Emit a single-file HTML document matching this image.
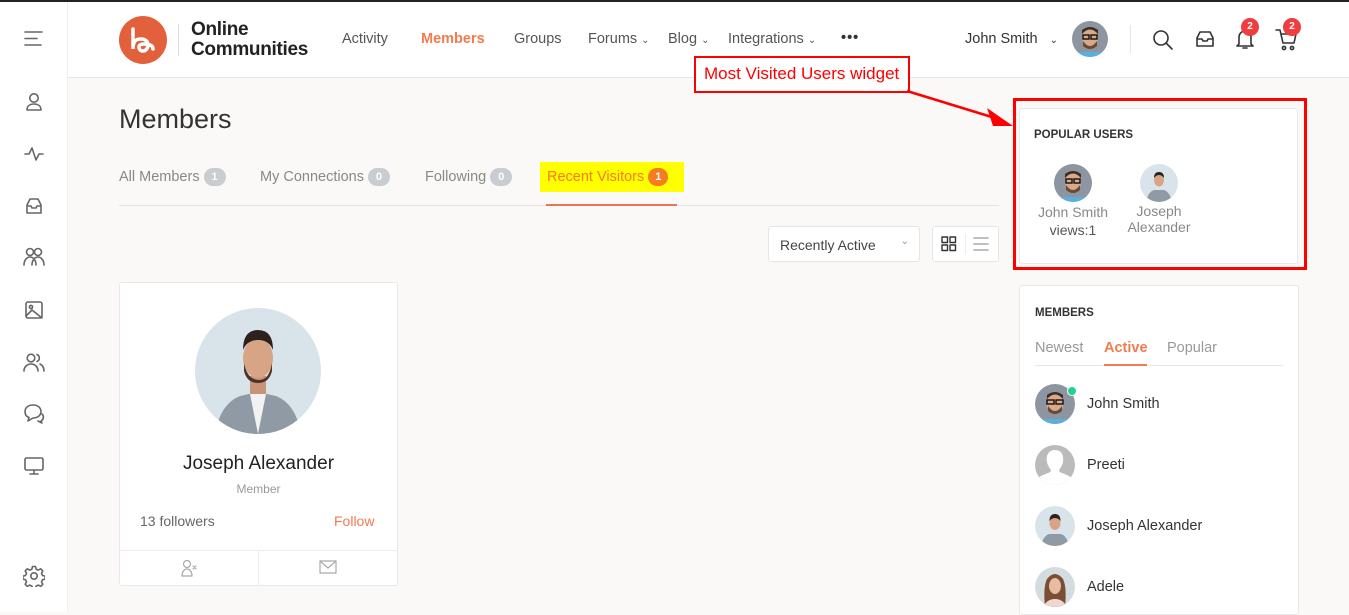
<!DOCTYPE html>
<html><head><meta charset="utf-8"><style>
*{margin:0;padding:0;box-sizing:border-box}
body{width:1349px;height:610px;overflow:hidden;background:#faf9f7;font-family:"Liberation Sans",sans-serif;position:relative;color:#333}
.a{position:absolute}
.ic{position:absolute;stroke:#666;fill:none;stroke-width:1.6;stroke-linecap:round;stroke-linejoin:round}
.nav{position:absolute;top:31px;font-size:14.5px;color:#555}
.badge{display:inline-block;width:22px;height:18px;border-radius:9px;background:#c9ccd1;color:#fff;font-size:11px;font-weight:bold;text-align:center;line-height:18px;vertical-align:1px;margin-left:4px}
.tab{position:absolute;top:168px;font-size:14.5px;color:#888}
</style></head><body>
<div class="a" style="left:0;top:0;width:1349px;height:2px;background:#222"></div>
<!-- sidebar -->
<div class="a" style="left:0;top:2px;width:68px;height:610px;background:#fff;border-right:1px solid #eee"></div>
<!-- header -->
<div class="a" style="left:68px;top:2px;width:1281px;height:76px;background:#fff;border-bottom:1px solid #e8e8e8"></div>
<svg class="ic" style="left:24px;top:30px" width="20" height="18"><path d="M1 2h17M1 8.5h12M1 15h16"/></svg>
<svg class="ic" style="left:24px;top:92px" width="20" height="20"><circle cx="10" cy="6" r="4.2"/><path d="M3 18c0-4 3-6 7-6s7 2 7 6z"/></svg>
<svg class="ic" style="left:24px;top:144px" width="20" height="20"><path d="M1 10h4l3-6 4 12 3-6h4"/></svg>
<svg class="ic" style="left:24px;top:196px" width="20" height="20"><path d="M3 9l3-6h8l3 6v8H3z M3 10h4l1 2h4l1-2h4"/></svg>
<svg class="ic" style="left:22px;top:246px" width="24" height="22"><circle cx="8" cy="6" r="3.5"/><circle cx="16" cy="6" r="3.5"/><path d="M2 19c0-5 3-8 6-8s6 3 6 8M10 19c0-5 3-8 6-8s6 3 6 8"/></svg>
<svg class="ic" style="left:24px;top:300px" width="20" height="20"><rect x="2" y="2" width="16" height="16" rx="2"/><circle cx="7" cy="7" r="1.6"/><path d="M2 16l6-6 10 8"/></svg>
<svg class="ic" style="left:23px;top:352px" width="22" height="20"><circle cx="8" cy="6" r="3.8"/><path d="M1 19c0-4 3-7 7-7s7 3 7 7M14 2.5a3.8 3.8 0 0 1 0 7M17 12c2 1 4 3 4 7"/></svg>
<svg class="ic" style="left:23px;top:403px" width="22" height="22"><path d="M10 2c5 0 8 3 8 6.5S15 15 10 15l-5 3 1-3.5C3 13.5 2 11 2 8.5 2 5 5 2 10 2z"/><path d="M19 11c2 2 2 5-1 7l1 2-4-2"/></svg>
<svg class="ic" style="left:24px;top:456px" width="20" height="20"><rect x="1" y="2" width="18" height="12" rx="1.5"/><path d="M10 14v4M6 18h8"/></svg>
<svg class="ic" style="left:23px;top:565px" width="22" height="22"><circle cx="11" cy="11" r="3.2"/><path d="M9.5 1.5h3l.6 2.6 2.2 1 2.4-1.3 2.1 2.1-1.3 2.4 1 2.2 2.6.6v3l-2.6.6-1 2.2 1.3 2.4-2.1 2.1-2.4-1.3-2.2 1-.6 2.6h-3l-.6-2.6-2.2-1-2.4 1.3-2.1-2.1 1.3-2.4-1-2.2-2.6-.6v-3l2.6-.6 1-2.2-1.3-2.4 2.1-2.1 2.4 1.3 2.2-1z"/></svg>
<!-- logo -->
<svg class="a" style="left:118px;top:15px" width="50" height="50"><circle cx="25" cy="25" r="24" fill="#e2613c"/><path d="M15 14v20c0-8 3-10 8-10s7 3 7 6-2 6-5 6-4-2-4-4 2-3 5-3c5 0 9 1 9 5" fill="none" stroke="#fff" stroke-width="3.5" stroke-linecap="round"/></svg>
<div class="a" style="left:178px;top:24px;width:1px;height:32px;background:#ddd"></div>
<div class="a" style="left:191px;top:20px;font-size:19px;font-weight:bold;line-height:20px;color:#222;letter-spacing:-0.3px">Online<br>Communities</div>
<div class="nav" style="left:342px">Activity</div>
<div class="nav" style="left:421px;color:#f07c4f;font-weight:bold">Members</div>
<div class="nav" style="left:514px">Groups</div>
<div class="nav" style="left:588px">Forums <span style="font-size:10px">⌄</span></div>
<div class="nav" style="left:668px">Blog <span style="font-size:10px">⌄</span></div>
<div class="nav" style="left:728px">Integrations <span style="font-size:10px">⌄</span></div>
<div class="nav" style="left:841px;font-weight:bold;letter-spacing:1px;top:30px;color:#333">•••</div>
<div class="nav" style="left:965px;color:#333">John Smith &nbsp;&nbsp;<span style="font-size:10px">⌄</span></div>
<svg class="a" style="left:1072px;top:21px" width="36" height="36"><defs><clipPath id="c1"><circle cx="18" cy="18" r="18"/></clipPath></defs><g clip-path="url(#c1)"><rect width="36" height="36" fill="#8d96a0"/><ellipse cx="18" cy="17" rx="8" ry="10" fill="#d9a98a"/><path d="M10 13q8-9 16 0v-4q-8-6-16 0z" fill="#3a2d25"/><path d="M11 20q7 10 14 0v5q-7 6-14 0z" fill="#6b4a35"/><rect x="11" y="14" width="6" height="4" fill="none" stroke="#111" stroke-width="1.4"/><rect x="19" y="14" width="6" height="4" fill="none" stroke="#111" stroke-width="1.4"/><rect x="6" y="31" width="24" height="8" fill="#5ab0dd"/></g></svg>
<div class="a" style="left:1130px;top:25px;width:1px;height:28px;background:#e5e5e5"></div>
<svg class="ic" style="left:1152px;top:29px;stroke:#333" width="22" height="22"><circle cx="9" cy="9" r="7"/><path d="M14 14l6 6"/></svg>
<svg class="ic" style="left:1194px;top:29px;stroke:#333" width="22" height="20"><path d="M3 9l3-6h10l3 6v8H3z M3 10h5l1 2h4l1-2h5"/></svg>
<svg class="ic" style="left:1235px;top:28px;stroke:#333" width="20" height="22"><path d="M4 16V9a6 6 0 0 1 12 0v7l2 2H2z M8 20h4"/></svg>
<svg class="ic" style="left:1275px;top:28px;stroke:#333" width="24" height="24"><path d="M1 2h4l3 13h11l2-9H7"/><circle cx="9" cy="20" r="1.6"/><circle cx="17" cy="20" r="1.6"/></svg>
<div class="a" style="left:1241px;top:18px;width:18px;height:18px;border-radius:9px;background:#ef3e42;color:#fff;font-size:10px;font-weight:bold;text-align:center;line-height:18px">2</div>
<div class="a" style="left:1283px;top:18px;width:18px;height:18px;border-radius:9px;background:#ef3e42;color:#fff;font-size:10px;font-weight:bold;text-align:center;line-height:18px">2</div>
<!-- title -->
<div class="a" style="left:119px;top:104px;font-size:27px;color:#333">Members</div>
<div class="tab" style="left:119px">All Members<span class="badge">1</span></div>
<div class="tab" style="left:260px">My Connections<span class="badge">0</span></div>
<div class="tab" style="left:425px">Following<span class="badge">0</span></div>
<div class="a" style="left:540px;top:162px;width:144px;height:30px;background:#ffff00"></div>
<div class="tab" style="left:547px;color:#f77b1f">Recent Visitors<span class="badge" style="background:#f77b1f;width:20px">1</span></div>
<div class="a" style="left:119px;top:205px;width:880px;height:1px;background:#e4e4e4"></div>
<div class="a" style="left:546px;top:204px;width:131px;height:2px;background:#e8755a"></div>
<!-- controls -->
<div class="a" style="left:768px;top:226px;width:152px;height:36px;background:#fff;border:1px solid #e6e6e6;border-radius:3px;font-size:14px;color:#444;padding:10px 0 0 11px">Recently Active<span style="position:absolute;right:10px;top:9px;font-size:10px;color:#999">⌄</span></div>
<div class="a" style="left:932px;top:226px;width:67px;height:36px;background:#fff;border:1px solid #e6e6e6;border-radius:3px"></div>
<svg class="ic" style="left:941px;top:236px;stroke:#333;stroke-width:1.4" width="16" height="16"><rect x="1" y="1" width="5.5" height="5.5"/><rect x="9" y="1" width="5.5" height="5.5"/><rect x="1" y="9" width="5.5" height="5.5"/><rect x="9" y="9" width="5.5" height="5.5"/></svg>
<div class="a" style="left:965px;top:234px;width:1px;height:20px;background:#eee"></div>
<svg class="ic" style="left:973px;top:237px;stroke:#aaa" width="16" height="14"><path d="M1 1h14M1 7h14M1 13h14"/></svg>
<!-- member card -->
<div class="a" style="left:119px;top:282px;width:279px;height:304px;background:#fff;border:1px solid #e8e8e8;border-radius:3px"></div>
<svg class="a" style="left:195px;top:308px" width="126" height="126"><defs><clipPath id="c2"><circle cx="63" cy="63" r="63"/></clipPath></defs><g clip-path="url(#c2)"><rect width="126" height="126" fill="#d8e4ea"/><path d="M20 126q5-30 25-38l18-4 18 4q20 8 25 38z" fill="#8f9aa5"/><path d="M55 86l8 40 8-40z" fill="#f2f2f2"/><rect x="55" y="68" width="16" height="18" fill="#c89478"/><ellipse cx="63" cy="50" rx="15" ry="20" fill="#d8a486"/><path d="M48 42q0-20 15-20t15 20q-4-10-15-10t-15 10z" fill="#2c211c"/><path d="M49 55q3 16 14 17t14-17v8q-3 12-14 12t-14-12z" fill="#4a3427"/></g></svg>
<div class="a" style="left:119px;top:453px;width:279px;text-align:center;font-size:19px;color:#222">Joseph Alexander</div>
<div class="a" style="left:119px;top:482px;width:279px;text-align:center;font-size:12px;color:#999">Member</div>
<div class="a" style="left:140px;top:513px;font-size:14px;color:#666">13 followers</div>
<div class="a" style="left:334px;top:513px;font-size:14px;color:#f07c4f">Follow</div>
<div class="a" style="left:120px;top:550px;width:277px;height:1px;background:#ececec"></div>
<div class="a" style="left:258px;top:550px;width:1px;height:36px;background:#ececec"></div>
<svg class="ic" style="left:180px;top:559px;stroke:#aaa;stroke-width:1.2" width="18" height="18"><circle cx="7" cy="5" r="3.5"/><path d="M2 17c0-4 2-7 5-7s5 3 5 7zM13 7l3 3M16 7l-3 3"/></svg>
<svg class="ic" style="left:319px;top:560px;stroke:#aaa;stroke-width:1.2" width="18" height="14"><rect x="1" y="1" width="16" height="12"/><path d="M1 1l8 7 8-7"/></svg>
<!-- popular users widget -->
<div class="a" style="left:1019px;top:108px;width:279px;height:156px;background:#fff;border:1px solid #e8e8e8;border-radius:3px"></div>
<div class="a" style="left:1013px;top:98px;width:294px;height:172px;border:3px solid #f00"></div>
<div class="a" style="left:1034px;top:129px;font-size:11.5px;font-weight:bold;color:#333">POPULAR USERS</div>
<svg class="a" style="left:1054px;top:164px" width="38" height="38"><defs><clipPath id="c3"><circle cx="19" cy="19" r="19"/></clipPath></defs><g clip-path="url(#c3)"><rect width="38" height="38" fill="#8d96a0"/><ellipse cx="19" cy="18" rx="8" ry="10" fill="#d9a98a"/><path d="M11 14q8-9 16 0v-4q-8-6-16 0z" fill="#3a2d25"/><path d="M12 21q7 10 14 0v5q-7 6-14 0z" fill="#6b4a35"/><rect x="12" y="15" width="6" height="4" fill="none" stroke="#111" stroke-width="1.4"/><rect x="20" y="15" width="6" height="4" fill="none" stroke="#111" stroke-width="1.4"/><rect x="6" y="33" width="26" height="8" fill="#5ab0dd"/></g></svg>
<svg class="a" style="left:1140px;top:164px" width="38" height="38"><defs><clipPath id="c4"><circle cx="19" cy="19" r="19"/></clipPath></defs><g clip-path="url(#c4)"><rect width="38" height="38" fill="#d8e4ea"/><path d="M6 38q2-10 8-12h10q6 2 8 12z" fill="#8f9aa5"/><ellipse cx="19" cy="16" rx="5" ry="6.5" fill="#d8a486"/><path d="M14 14q0-6 5-6t5 6q-2-3-5-3t-5 3z" fill="#2c211c"/></g></svg>
<div class="a" style="left:1028px;top:203px;width:90px;text-align:center;font-size:14px;line-height:18px;color:#888">John Smith<br><span style="color:#555">views:1</span></div>
<div class="a" style="left:1114px;top:203px;width:90px;text-align:center;font-size:14px;line-height:16px;color:#888">Joseph Alexander</div>
<!-- annotation -->
<div class="a" style="left:694px;top:56px;width:216px;height:37px;background:#fff;border:2px solid #f00;color:#f00;font-size:17px;padding:6px 0 0 8px">Most Visited Users widget</div>
<svg class="a" style="left:905px;top:88px" width="112" height="45"><path d="M2 3L90 30" stroke="#f00" stroke-width="2.5"/><path d="M108 38L82 20 88 38z" fill="#f00"/></svg>
<!-- members widget -->
<div class="a" style="left:1019px;top:285px;width:280px;height:330px;background:#fff;border:1px solid #e8e8e8;border-radius:3px"></div>
<div class="a" style="left:1035px;top:307px;font-size:11.5px;font-weight:bold;color:#333">MEMBERS</div>
<div class="a" style="left:1035px;top:340px;font-size:14.5px;color:#999">Newest</div>
<div class="a" style="left:1104px;top:340px;font-size:14.5px;color:#f07c4f;font-weight:bold">Active</div>
<div class="a" style="left:1167px;top:340px;font-size:14.5px;color:#999">Popular</div>
<div class="a" style="left:1035px;top:365px;width:248px;height:1px;background:#e8e8e8"></div>
<div class="a" style="left:1104px;top:364px;width:43px;height:2px;background:#f07c4f"></div>
<svg class="a" style="left:1035px;top:384px" width="40" height="40"><defs><clipPath id="c5"><circle cx="20" cy="20" r="20"/></clipPath></defs><g clip-path="url(#c5)"><rect width="40" height="40" fill="#8d96a0"/><ellipse cx="20" cy="19" rx="8.5" ry="10.5" fill="#d9a98a"/><path d="M12 15q8-9 16 0v-4q-8-6-16 0z" fill="#3a2d25"/><path d="M13 22q7 10 14 0v5q-7 6-14 0z" fill="#6b4a35"/><rect x="12" y="16" width="7" height="4" fill="none" stroke="#111" stroke-width="1.4"/><rect x="21" y="16" width="7" height="4" fill="none" stroke="#111" stroke-width="1.4"/><rect x="6" y="35" width="28" height="8" fill="#5ab0dd"/></g></svg>
<div class="a" style="left:1067px;top:386px;width:10px;height:10px;border-radius:5px;background:#1fd28e;border:1px solid #fff"></div>
<svg class="a" style="left:1035px;top:445px" width="40" height="40"><defs><clipPath id="c6"><circle cx="20" cy="20" r="20"/></clipPath></defs><g clip-path="url(#c6)"><rect width="40" height="40" fill="#bbb"/><path d="M20 5c7 0 9 6 8 12-1 5-4 7-4 9 2 3 10 3 13 8v6H3v-6c3-5 11-5 13-8 0-2-3-4-4-9-1-6 1-12 8-12z" fill="#fff"/></g></svg>
<svg class="a" style="left:1035px;top:506px" width="40" height="40"><defs><clipPath id="c7"><circle cx="20" cy="20" r="20"/></clipPath></defs><g clip-path="url(#c7)"><rect width="40" height="40" fill="#d8e4ea"/><path d="M6 40q2-10 8-12h12q6 2 8 12z" fill="#8f9aa5"/><ellipse cx="20" cy="17" rx="5.5" ry="7" fill="#d8a486"/><path d="M14.5 15q0-7 5.5-7t5.5 7q-2-3-5.5-3t-5.5 3z" fill="#2c211c"/></g></svg>
<svg class="a" style="left:1035px;top:567px" width="40" height="40"><defs><clipPath id="c8"><circle cx="20" cy="20" r="20"/></clipPath></defs><g clip-path="url(#c8)"><rect width="40" height="40" fill="#d3dde0"/><path d="M10 40q-2-20 2-28 8-10 16 0 4 8 2 28z" fill="#7a4e34"/><ellipse cx="20" cy="19" rx="6" ry="8" fill="#e8bca2"/><path d="M8 40q4-8 12-8t12 8z" fill="#f0d8d0"/></g></svg>
<div class="a" style="left:1087px;top:396px;font-size:14.5px;color:#333">John Smith</div>
<div class="a" style="left:1087px;top:457px;font-size:14.5px;color:#333">Preeti</div>
<div class="a" style="left:1087px;top:518px;font-size:14.5px;color:#333">Joseph Alexander</div>
<div class="a" style="left:1087px;top:579px;font-size:14.5px;color:#333">Adele</div>
</body></html>
